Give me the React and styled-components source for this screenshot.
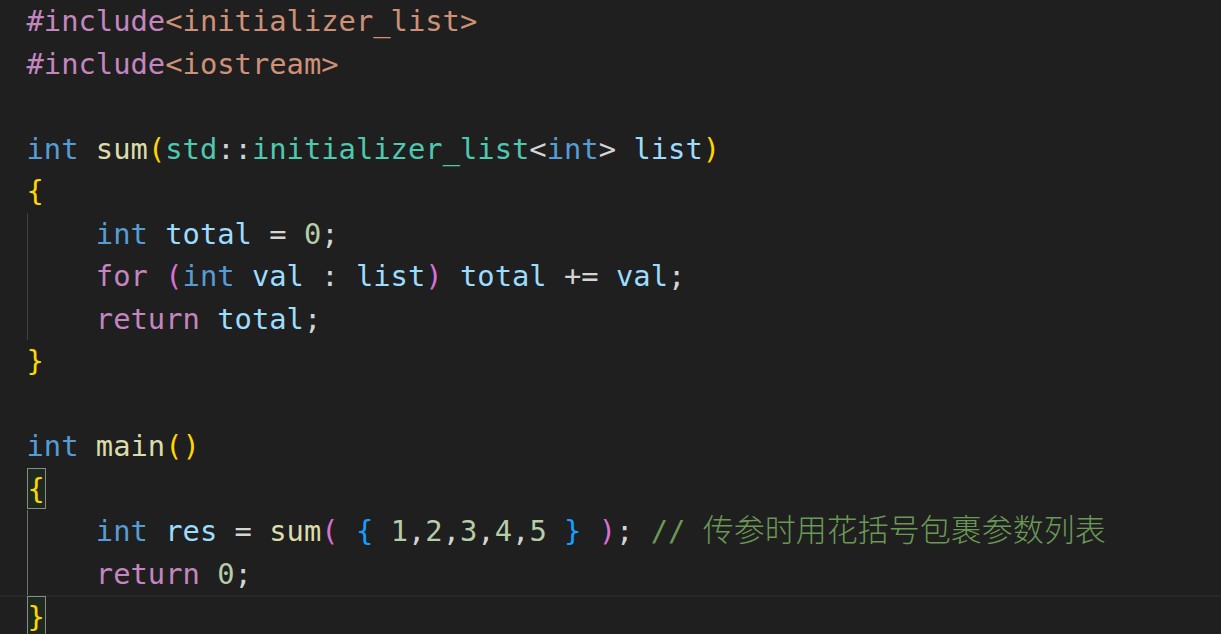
import React from 'react';
import styled, {createGlobalStyle} from 'styled-components';

const GlobalStyle = createGlobalStyle`
    html, body {
        margin: 0;
        padding: 0;
        background: #1f1f1f;
        overflow: hidden;
    }
`;

const C = {
    kw: '#569cd6',
    ctrl: '#c586c0',
    str: '#ce9178',
    fn: '#dcdcaa',
    type: '#4ec9b0',
    vr: '#9cdcfe',
    num: '#b5cea8',
    op: '#d4d4d4',
    cm: '#6a9955',
    b1: '#ffd700',
    b2: '#da70d6',
    b3: '#179fff',
};

const Editor = styled.div`
    width: 1221px;
    height: 634px;
    background: #1f1f1f;
    overflow: hidden;
    font-family: "DejaVu Sans Mono", "Liberation Mono", monospace;
    font-size: 28.8px;
`;

const Line = styled.div`
    height: 42.5px;
    line-height: 42.5px;
    padding-left: 26.5px;
    white-space: pre;
    box-sizing: border-box;
    box-shadow: ${p => p.$current ? 'inset 0 2px 0 #282828' : 'none'};
`;

const Indent = styled.span`
    display: inline-block;
    width: 4ch;
    height: 42.5px;
    vertical-align: top;
    box-shadow: inset 1px 0 0 ${p => p.$active ? '#707070' : '#404040'};
`;

const Tok = styled.span`
    color: ${p => p.$c || C.op};
`;

const Match = styled.span`
    display: inline-block;
    height: 41px;
    line-height: 40px;
    vertical-align: top;
    margin-top: 0.5px;
    box-sizing: border-box;
    border: 1px solid #8a8a8a;
    background: #1f2a1f;
    color: ${C.b1};
`;

const Comment = styled.span`
    color: ${C.cm};
`;

const Cjk = styled.span`
    font-family: "Noto Sans CJK SC", "Noto Sans", sans-serif;
    font-size: 31px;
    font-weight: 300;
    line-height: 20px;
`;

const code = [
    {t: [['#include', C.ctrl], ['<initializer_list>', C.str]]},
    {t: [['#include', C.ctrl], ['<iostream>', C.str]]},
    {t: []},
    {t: [['int', C.kw], [' '], ['sum', C.fn], ['(', C.b1], ['std', C.type], ['::'], ['initializer_list', C.type], ['<'], ['int', C.kw], ['>'], [' '], ['list', C.vr], [')', C.b1]]},
    {t: [['{', C.b1]]},
    {indent: 'dim', t: [['int', C.kw], [' '], ['total', C.vr], [' = '], ['0', C.num], [';']]},
    {indent: 'dim', t: [['for', C.ctrl], [' '], ['(', C.b2], ['int', C.kw], [' '], ['val', C.vr], [' : '], ['list', C.vr], [')', C.b2], [' '], ['total', C.vr], [' += '], ['val', C.vr], [';']]},
    {indent: 'dim', t: [['return', C.ctrl], [' '], ['total', C.vr], [';']]},
    {t: [['}', C.b1]]},
    {t: []},
    {t: [['int', C.kw], [' '], ['main', C.fn], ['()', C.b1]]},
    {match: '{'},
    {indent: 'active', t: [['int', C.kw], [' '], ['res', C.vr], [' = '], ['sum', C.fn], ['(', C.b2], [' '], ['{', C.b3], [' '], ['1', C.num], [','], ['2', C.num], [','], ['3', C.num], [','], ['4', C.num], [','], ['5', C.num], [' '], ['}', C.b3], [' '], [')', C.b2], [';'], [' ']], comment: '传参时用花括号包裹参数列表'},
    {indent: 'active', t: [['return', C.ctrl], [' '], ['0', C.num], [';']]},
    {match: '}', current: true},
];

export default function App() {
    return (
        <Editor>
            <GlobalStyle />
            {code.map((line, i) => (
                <Line key={i} $current={line.current}>
                    {line.indent && <Indent $active={line.indent === 'active'} />}
                    {line.match && <Match>{line.match}</Match>}
                    {(line.t || []).map(([text, color], j) => (
                        <Tok key={j} $c={color}>{text}</Tok>
                    ))}
                    {line.comment && (
                        <Comment>// <Cjk>{line.comment}</Cjk></Comment>
                    )}
                </Line>
            ))}
        </Editor>
    );
}
